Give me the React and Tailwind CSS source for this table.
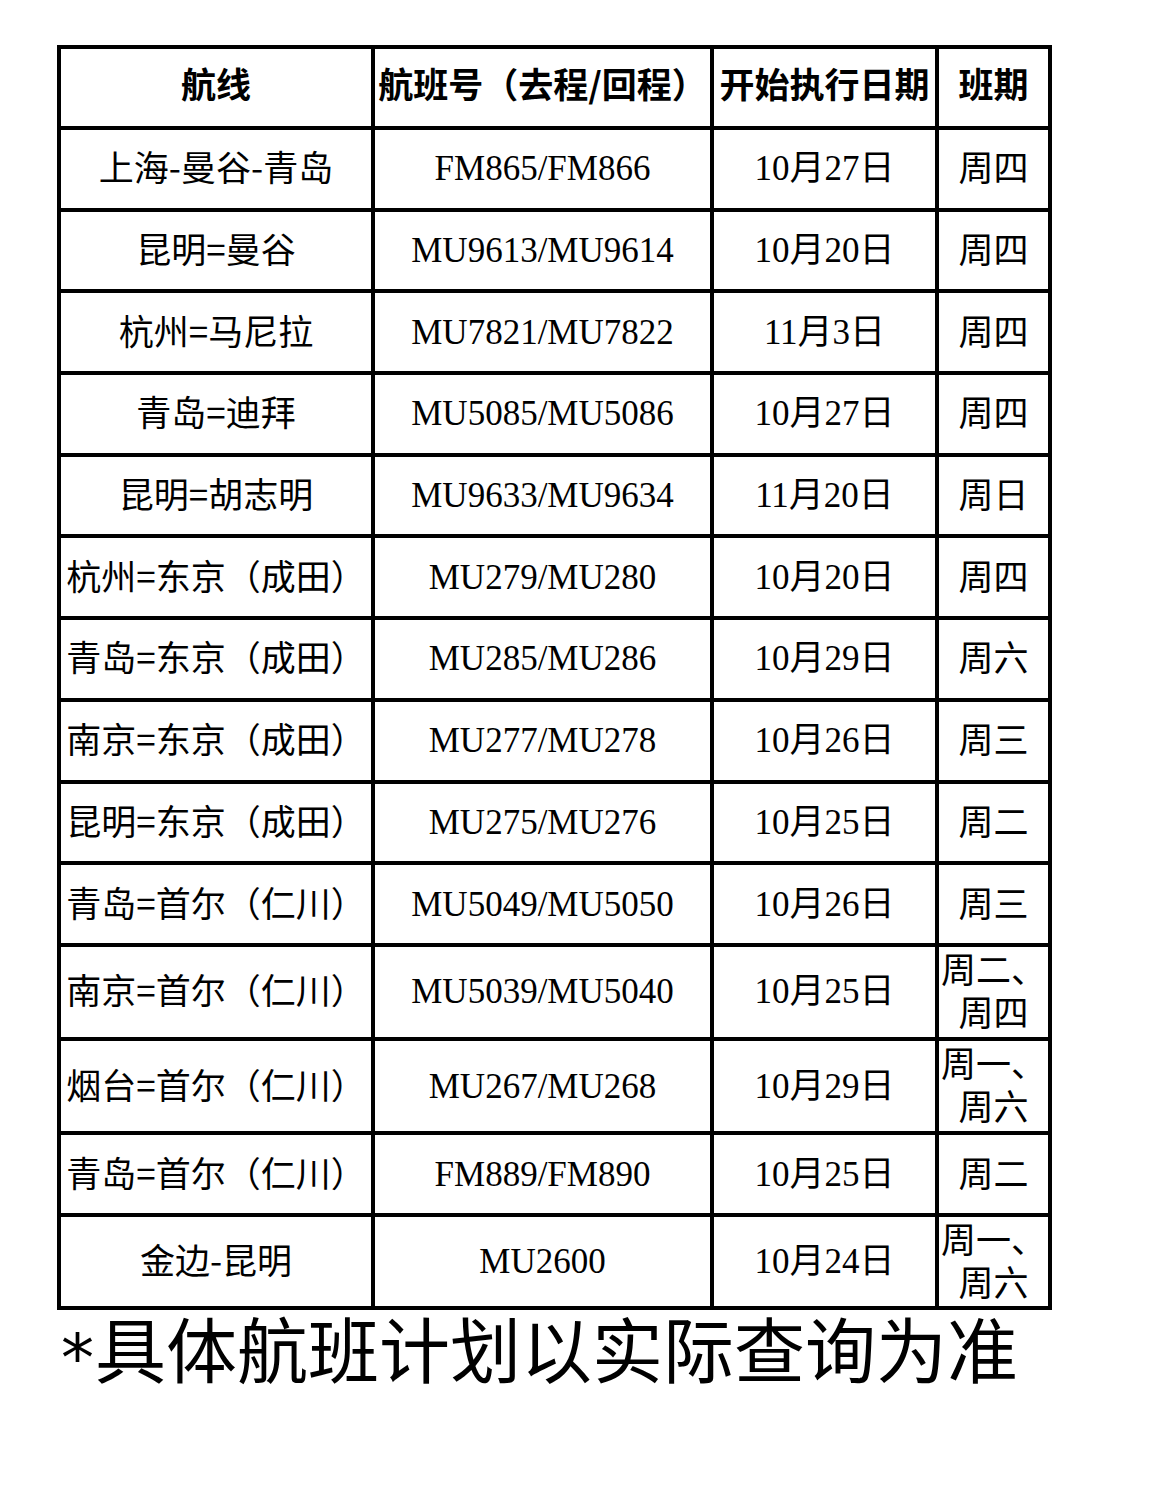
const rows = [
  ['上海-曼谷-青岛', 'FM865/FM866', '10月27日', '周四'],
  ['昆明=曼谷', 'MU9613/MU9614', '10月20日', '周四'],
  ['杭州=马尼拉', 'MU7821/MU7822', '11月3日', '周四'],
  ['青岛=迪拜', 'MU5085/MU5086', '10月27日', '周四'],
  ['昆明=胡志明', 'MU9633/MU9634', '11月20日', '周日'],
  ['杭州=东京（成田）', 'MU279/MU280', '10月20日', '周四'],
  ['青岛=东京（成田）', 'MU285/MU286', '10月29日', '周六'],
  ['南京=东京（成田）', 'MU277/MU278', '10月26日', '周三'],
  ['昆明=东京（成田）', 'MU275/MU276', '10月25日', '周二'],
  ['青岛=首尔（仁川）', 'MU5049/MU5050', '10月26日', '周三'],
  ['南京=首尔（仁川）', 'MU5039/MU5040', '10月25日', '周二、周四'],
  ['烟台=首尔（仁川）', 'MU267/MU268', '10月29日', '周一、周六'],
  ['青岛=首尔（仁川）', 'FM889/FM890', '10月25日', '周二'],
  ['金边-昆明', 'MU2600', '10月24日', '周一、周六'],
];

const sans = "font-['Noto_Sans_CJK_SC',sans-serif]";
const serif = "font-['Liberation_Serif','Noto_Sans_CJK_SC',serif]";

export default function App() {
  return (
    <div className="bg-white text-black pt-[45px] pb-[100px]">
      <div className="grid w-[995px] ml-[57px] bg-black gap-[4px] p-[4px] grid-cols-[310px_335px_221px_109px] grid-rows-[77px_repeat(10,77.7px)_90px_90.5px_78px_89px] text-[35px] leading-[43px]">
        {/* header */}
        {['航线', '航班号（去程/回程）', '开始执行日期', '班期'].map((h) => (
          <div key={h} className={`bg-white flex items-center justify-center text-center font-bold whitespace-nowrap pb-[10px] ${sans}`}>
            {h}
          </div>
        ))}
        {rows.map(([route, flight, date, days]) => (
          <div key={route + flight} className="contents">
            <div className={`bg-white flex items-center justify-center text-center whitespace-nowrap pb-[6px] ${sans}`}>{route}</div>
            <div className={`bg-white flex items-center justify-center text-center ${serif}`}>{flight}</div>
            <div className={`bg-white flex items-center justify-center text-center ${serif}`}>{date}</div>
            <div className={`bg-white flex items-center justify-center text-center pb-[6px] ${sans}`}>{days}</div>
          </div>
        ))}
      </div>
      <p className={`ml-[61px] mt-[1px] text-[71px] leading-[71px] whitespace-nowrap ${sans}`}>
        <span className="inline-block w-[34px] font-['DejaVu_Sans',sans-serif] text-[66px] relative top-[4px]">*</span>具体航班计划以实际查询为准
      </p>
    </div>
  );
}
